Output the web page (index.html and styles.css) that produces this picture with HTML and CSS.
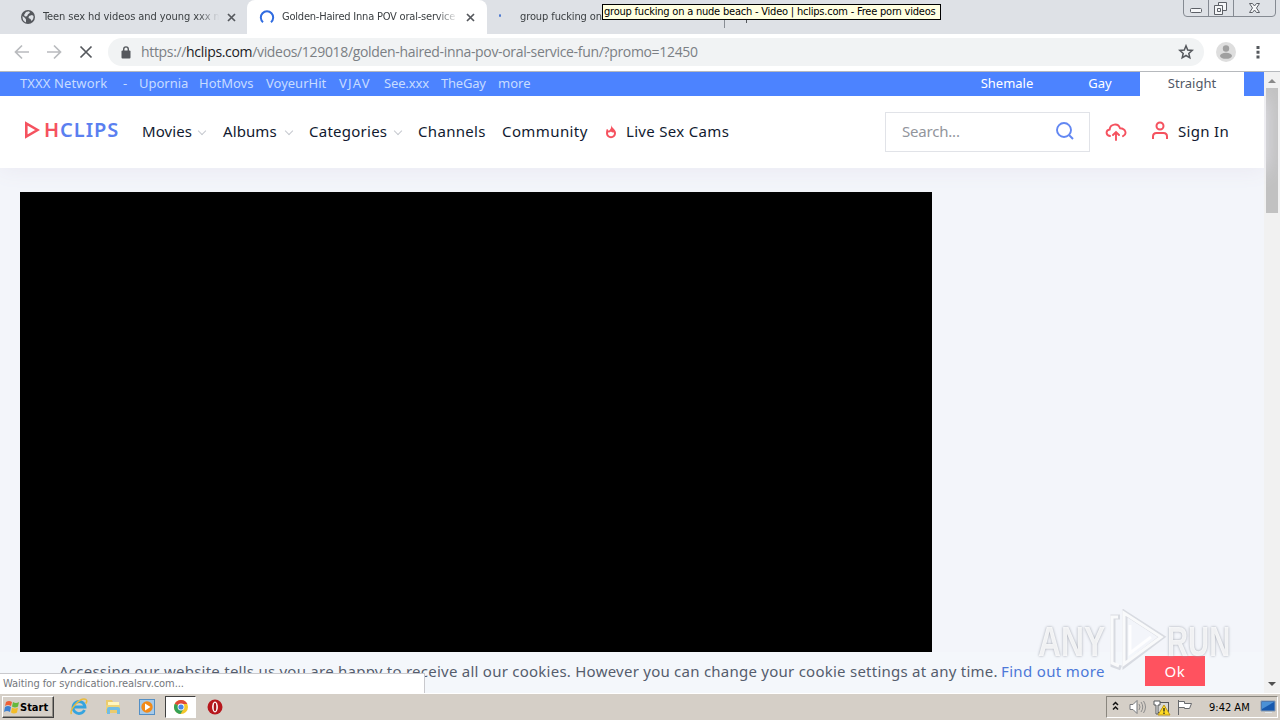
FILE: index.html
```html
<!DOCTYPE html>
<html lang="en">
<head>
<meta charset="utf-8">
<title>Desktop</title>
<link rel="stylesheet" href="styles.css">
</head>
<body>
<div class="desktop">
  <div class="tabs">
    <div class="tab tab-first">
      <svg class="globe" width="14" height="14" viewBox="0 0 14 14"><circle cx="7" cy="7" r="7" fill="#55585d"/><path d="M1.500 6L4 8l1 1.500v3C2.500 11.500 1.300 9.500 1.500 6zM5 2l3-.7 1 1.500-2 1.500-1 2-2 .2L3 5zM8 6l3-1 1.500 1c.2 2-.5 4-2 5L9.500 9 7.500 8z" fill="#dee1e6"/></svg>
      <span class="tab-title t1">Teen sex hd videos and young xxx m</span>
      <svg class="close" width="9" height="9" viewBox="0 0 9 9"><path d="M1 1l7 7M8 1L1 8" stroke="#55585d" stroke-width="1.700"/></svg>
    </div>
    <div class="tab tab-active">
      <svg class="spin" width="16" height="16" viewBox="0 0 16 16"><path d="M4 13.200A6.200 6.200 0 1 1 12 13.200" fill="none" stroke="#2f6be0" stroke-width="2"/></svg>
      <span class="tab-title t2">Golden-Haired Inna POV oral-service</span>
      <svg class="close" width="9" height="9" viewBox="0 0 9 9"><path d="M1 1l7 7M8 1L1 8" stroke="#55585d" stroke-width="1.700"/></svg>
    </div>
    <div class="tab tab-last">
      <i class="dot"></i>
      <span class="tab-title t3">group fucking on a nude beach - Video</span>
      <i class="divider"></i><i class="plus"></i>
    </div>
    <div class="tooltip"><span>group fucking on a nude beach - Video | hclips.com - Free porn videos</span></div>
    <svg class="winbtns" width="94" height="18" viewBox="0 0 94 18"><path d="M.5 0v13q0 3.500 3.500 3.500h85q3.500 0 3.500-3.500V0M25.500 0v16M50.500 0v16" fill="none" stroke="#858a92"/><g fill="#f5f6f8" stroke="#5d6067"><rect x="7.500" y="8.500" width="11" height="4" rx="1"/><path d="M35.500 2.500h8v8h-8z"/><path d="M31.500 5.500h8v9h-8z"/><path d="M34.500 8.500h3v3h-3z"/><path d="M66.500 3.500h3l2 2.500 2-2.500h3L73.500 8l3 4.500h-3L71.500 10l-2 2.500h-3l3-4.500z"/></g></svg>
  </div>

  <div class="toolbar">
    <svg class="navicons" width="108" height="36" viewBox="0 0 108 36"><g fill="none" stroke="#b9bbbe" stroke-width="1.700"><path d="M29 18H16M22 11.500L15.500 18l6.500 6.500M47 18h13M54 11.500l6.500 6.500-6.500 6.500"/><path d="M80.500 12.500l11 11M91.500 12.500l-11 11" stroke="#55585d" stroke-width="1.700"/></g></svg>
    <div class="omnibox">
      <svg class="lock" width="10" height="13" viewBox="0 0 10 13"><rect x=".5" y="4.500" width="9" height="8" rx="1" fill="#55585d"/><path d="M2.700 5V3.200a2.300 2.300 0 0 1 4.600 0V5" fill="none" stroke="#55585d" stroke-width="1.400"/></svg>
      <span class="url">https://<b>hclips.com</b>/videos/129018/golden-haired-inna-pov-oral-service-fun/?promo=12450</span>
      <svg class="star" width="16" height="16" viewBox="0 0 16 16"><path d="M8 1.800l1.700 4.200 4.500.4-3.400 3 1 4.400L8 11.500l-3.800 2.300 1-4.400-3.400-3 4.500-.4z" fill="none" stroke="#55585d" stroke-width="1.500"/></svg>
    </div>
    <svg class="avatar" width="20" height="20" viewBox="0 0 20 20"><circle cx="10" cy="10" r="10" fill="#dedede"/><circle cx="10" cy="6.500" r="3.200" fill="#a0a0a0"/><ellipse cx="10" cy="13.800" rx="6" ry="3" fill="#a0a0a0"/></svg>
    <svg class="dots" width="4" height="14" viewBox="0 0 4 14"><path d="M.5 1h3v3h-3zM.5 5.700h3v3h-3zM.5 10.500h3v3h-3z" fill="#55585d"/></svg>
  </div>

  <div class="view">
    <div class="page">
      <div class="network">
        <span class="n1">TXXX Network</span><span class="n2">-</span><span class="n3">Upornia</span><span class="n4">HotMovs</span><span class="n5">VoyeurHit</span><span class="n6">VJAV</span><span class="n7">See.xxx</span><span class="n8">TheGay</span><span class="n9">more</span>
        <div class="kinds"><span class="k1">Shemale</span><span class="k2">Gay</span><span class="k3">Straight</span></div>
      </div>
      <header class="header">
        <div class="logo"><svg width="16" height="18" viewBox="0 0 16 18"><path d="M2.300 2.500v13L13.500 9z" fill="none" stroke="#f5525f" stroke-width="2.600"/><path d="M6 7v4l3.500-2z" fill="#fff"/></svg><span class="brand"><em>H</em>CLIPS</span></div>
        <nav class="menu">
          <span class="m1">Movies</span><span class="m2">Albums</span><span class="m3">Categories</span><span class="m4">Channels</span><span class="m5">Community</span>
          <svg class="flame" width="12" height="15" viewBox="0 0 12 15"><path d="M6.300 1c.3 3 4.700 4.300 4.700 8.200A5 5 0 0 1 1 9.200C1 7.500 1.300 6.200 1.800 5c1 .4 1.600 1 1.900 2C5.600 5.500 6.500 3.500 6.300 1z" fill="#f5525f"/><path d="M3 8.500c1 .3 2.200-.2 3-1 .7.800 1.900 1.300 3 1 .3 2.400-1.200 3.700-3 3.700S2.800 11 3 8.500z" fill="#fff"/></svg>
          <span class="m6">Live Sex Cams</span>
        </nav>
        <div class="search"><span>Search...</span><svg width="20" height="20" viewBox="0 0 20 20"><circle cx="9" cy="9" r="7" fill="none" stroke="#6287f2" stroke-width="1.900"/><path d="M14 14l4 4" stroke="#6287f2" stroke-width="2"/></svg></div>
        <svg class="upload" width="22" height="20" viewBox="0 0 22 20"><g fill="none" stroke="#f5525f" stroke-width="1.900" stroke-linecap="round"><path d="M5 14C.2 13 .8 8 4.700 7.500 5 2 13 .500 15 6.200c5.800.3 7.300 6 3 8M11 18v-7.500M8 13l3-3 3 3"/></g></svg>
        <svg class="user" width="18" height="20" viewBox="0 0 18 20"><g fill="none" stroke="#f5525f" stroke-width="2"><circle cx="9" cy="5" r="3.500"/><path d="M2 18v-2.500Q2 12 5.500 12h7Q16 12 16 15.500V18"/></g></svg>
        <span class="signin">Sign In</span>
      </header>
      <main class="content"><div class="player"></div></main>
      <div class="cookies">
        <span class="notice">Accessing our website tells us you are happy to receive all our cookies. However you can change your cookie settings at any time.</span>
        <span class="more">Find out more</span>
        <button class="ok">Ok</button>
      </div>
    </div>
    <div class="scrollbar"><i class="up"></i><i class="thumb"></i><i class="down"></i></div>
    <div class="status"><span>Waiting for syndication.realsrv.com...</span></div>
    <div class="watermark"><span>ANY</span>
      <svg width="62" height="64" viewBox="0 0 62 64"><g fill="none" stroke="#c9cdd4" stroke-opacity=".65" stroke-width="5"><path d="M14 8H7v48l8 3M19 4l37 24-37 28z"/></g><g fill="none" stroke="#fff" stroke-opacity=".85" stroke-width="3"><path d="M12 8H6v46l7 3M18 4l37 24-37 27zM24 16v28l21-16"/></g></svg>
      <span>RUN</span></div>
  </div>

  <div class="taskbar">
    <div class="start"><svg width="16" height="16" viewBox="0 0 16 16"><path d="M2 3q3-2 6 0L7 7q-3-2-6 0z" fill="#ee6037"/><path d="M9 3q3 2 6 0l-1 4.500q-3 2-6 0z" fill="#65b83b"/><path d="M1 8q3-2 6 0l-1 5q-3-2-6 0z" fill="#3e81d1"/><path d="M8 8.500q3 2 6 0l-1 5q-3 2-6 0z" fill="#f2bc28"/></svg><span>Start</span></div>
    <svg class="ie" width="18" height="18" viewBox="0 0 18 18"><path d="M14.500 12A6 6 0 1 1 15 9H4" fill="none" stroke="#35a4df" stroke-width="2.800"/><path d="M1.500 16C-1 12 10-1 16 1.500c1.500 1 .5 3-.3 4" fill="none" stroke="#eabb3b" stroke-width="1.500"/></svg>
    <svg class="folder" width="18" height="18" viewBox="0 0 18 18"><path d="M2 2h6l1 2h6v11H2z" fill="#ebcb6c"/><path d="M4 4h11v4H4z" fill="#fff6be"/><path d="M2 7h14v4H2z" fill="#edd479"/><path d="M3 16v-5q0-2 2-2h9q2 0 2 2v5h-3v-4H6v4z" fill="#70bce4"/></svg>
    <svg class="wmp" width="16" height="16" viewBox="0 0 16 16"><rect x=".5" y=".5" width="15" height="15" fill="#a6cae9" stroke="#538fc5"/><circle cx="8" cy="8" r="5.700" fill="#f28a18"/><path d="M6 4.500v7L11.500 8z" fill="#fff"/></svg>
    <div class="task-active"><svg width="14" height="14" viewBox="0 0 14 14"><circle cx="7" cy="7" r="7" fill="#f4c72b"/><path d="M7 7L.8 3.800A7 7 0 0 1 13.300 4H7z" fill="#df4938"/><path d="M7 7L.8 3.800A7 7 0 0 0 6.500 14L9.500 9z" fill="#35a156"/><circle cx="7" cy="7" r="3.400" fill="#fff"/><circle cx="7" cy="7" r="2.600" fill="#4787e8"/></svg></div>
    <svg class="opera" width="16" height="16" viewBox="0 0 16 16"><circle cx="8" cy="8" r="7.500" fill="#b7171d"/><ellipse cx="8" cy="8" rx="2.900" ry="5.400" fill="#fff"/><ellipse cx="8" cy="8" rx="1.300" ry="4.300" fill="#a91319"/></svg>
    <div class="tray">
      <svg width="96" height="20" viewBox="0 0 96 20"><path d="M6 8l2.500-2.500L11 8M6 12.500L8.500 10l2.500 2.500" fill="none" stroke="#111" stroke-width="1.500"/><path d="M23 7.500h3l4-4v13l-4-4h-3z" fill="#fff" stroke="#77797c"/><path d="M32 7q2 3 0 6M34 5q3.500 5 0 10M36.500 4q4 6 0 12" fill="none" stroke="#8d8d8d"/><rect x="49.500" y="5.500" width="12" height="10" fill="#d8d8d4" stroke="#55585b"/><path d="M47 4h6v4h-2v9h-2V8h-2z" fill="#fff" stroke="#55585b"/><path d="M57 8l6 10H51z" fill="#ffdb21" stroke="#bd971a"/><path d="M57 11v3.500M57 15.500v1.500" stroke="#222" stroke-width="1.300"/><path d="M71.500 3v15M71.500 4.500h6v2h7l-2 5h-5v-1h-6" fill="#fff" stroke="#686a6d"/></svg>
      <span class="clock">9:42 AM</span>
      <svg class="monitor" width="16" height="14" viewBox="0 0 16 14"><path d="M1 1h14v10H1z" fill="#1759ae" stroke="#879bb2"/><path d="M2 2h12L2 9z" fill="#4b91d6"/><path d="M5 12h7v1H5z" fill="#dfe6eb"/></svg>
    </div>
  </div>
</div>
</body>
</html>
```
FILE: styles.css
```css
* { box-sizing: border-box; }
body { margin: 0; overflow: hidden; font-family: "DejaVu Sans Condensed", "DejaVu Sans", sans-serif; }
.desktop { width: 1280px; height: 720px; display: flex; flex-direction: column; overflow: hidden; }
span { white-space: nowrap; flex: none; }
svg { flex: none; display: block; }

.tabs { height: 34px; flex: none; background: #dee1e6; display: flex; position: relative; font-size: 11px; color: #3c4043; }
.tab { display: flex; align-items: center; height: 34px; }
.tab-first { width: 247px; padding-left: 21px; }
.tab-title { width: 176px; overflow: hidden; line-height: 16px; -webkit-mask-image: linear-gradient(90deg, #000 88%, transparent); }
.t1 { margin: 0 8px; letter-spacing: -.08px; }
.tab-active { width: 240px; padding-left: 12px; background: #fff; border-radius: 8px 8px 0 0; }
.t2 { margin: 0 8px 0 7px; letter-spacing: -.21px; }
.tab-last { width: 260px; padding-left: 12px; }
.dot { width: 3px; height: 3px; border-radius: 50%; background: #4774cf; margin-top: -3px; }
.t3 { width: 200px; margin-left: 19px; letter-spacing: -.1px; }
.divider { width: 1px; height: 19px; background: #888d94; margin: 3px 0 0 4px; }
.plus { width: 2px; height: 12px; background: #55585d; margin: 0 0 0 21px; }
.tooltip { position: absolute; left: 602px; top: 4px; width: 339px; height: 16px; background: #ffffe1; border: 1px solid #000; color: #000; line-height: 14px; padding-left: 1px; overflow: hidden; letter-spacing: -.21px; }
.winbtns { position: absolute; right: 3px; top: 0; }

.toolbar { height: 38px; flex: none; background: #fff; border-bottom: 1px solid #b6b9bd; display: flex; align-items: center; padding-bottom: 1px; }
.omnibox { width: 1096px; height: 28px; border-radius: 14px; background: #f1f3f4; display: flex; align-items: center; padding-left: 13px; }
.lock { margin-right: 10px; }
.url { width: 1037px; font: 14px/20px "Open Sans", sans-serif; letter-spacing: -.33px; color: #7b7f84; }
.url b { color: #202124; font-weight: 400; }
.avatar { margin-left: 12px; }
.dots { margin-left: 20px; }

.view { height: 621px; flex: none; display: flex; position: relative; }
.page { width: 1264px; display: flex; flex-direction: column; background: #f3f5fa; font-family: "Noto Sans", sans-serif; }
.network { height: 24px; flex: none; background: #4c83ff; display: flex; align-items: center; padding-left: 20px; font-size: 13px; color: #c7dcff; line-height: 22px; position: relative; z-index: 1; }
.network > span { height: 24px; }
.n1 { width: 103px; letter-spacing: .12px; } .n2 { width: 16px; } .n3 { width: 60px; } .n4 { width: 67px; } .n5 { width: 73px; } .n6 { width: 45px; letter-spacing: 1.2px; } .n7 { width: 57px; } .n8 { width: 57px; } .n9 { width: 34px; }
.n7 { letter-spacing: -.15px; } .n8 { letter-spacing: -.2px; }
.kinds { margin-left: 425px; display: flex; height: 24px; color: #fff; }
.kinds span { text-align: center; line-height: 23px; }
.k1 { width: 80px; margin-left: 10px; } .k2 { width: 80px; margin-left: 13px; }
.k3 { width: 104px; background: #fff; color: #515866; }
.header { height: 72px; flex: none; background: #fff; display: flex; align-items: center; box-shadow: 0 2px 20px #eae9f2; color: #111a30; font-size: 15px; position: relative; }
.logo { display: flex; align-items: center; margin: -4px 0 0 24px; width: 118px; }
.brand { margin-left: 4px; color: #5a7ff0; font: 600 20px/24px "Noto Sans", sans-serif; letter-spacing: .95px; }
.brand em { color: #f5525f; font-style: normal; }
.menu { display: flex; align-items: center; width: 743px; margin-top: -2px; }
.menu span { line-height: 20px; display: flex; align-items: center; letter-spacing: .1px; }
.m1 { width: 81px; } .m2 { width: 86px; } .m3 { width: 109px; } .m4 { width: 84px; } .m5 { width: 103px; }
.menu .m4, .menu .m6 { letter-spacing: .32px; } .menu .m5 { letter-spacing: .4px; }
.menu .m3 { letter-spacing: .25px; }
.m1::after, .m2::after, .m3::after { content: ""; width: 5px; height: 5px; border: solid #c6c9cf; border-width: 0 1.5px 1.5px 0; transform: rotate(45deg); margin-left: auto; }
.m1::after { margin-right: 18px; } .m2::after { margin-right: 17px; } .m3::after { margin-right: 17px; }
.flame { margin-right: 9px; }
.search { width: 205px; height: 40px; border: 1px solid #e1e3e8; display: flex; align-items: center; padding: 0 0 2px 16px; color: #92959c; }
.search span { width: 153px; letter-spacing: -.2px; }
.upload { margin-left: 15px; }
.user { margin: -3px 9px 0 24px; }
.signin { margin-top: -2px; letter-spacing: .3px; }
.content { flex: 1; padding: 24px 20px 0; display: flex; }
.player { width: 912px; height: 460px; background: #000; }
.cookies { height: 41px; flex: none; background: #f4f7fb; display: flex; align-items: center; padding: 0 0 3px 59px; font-size: 15px; color: #555d6d; line-height: 20px; }
.notice { width: 942px; letter-spacing: .245px; }
.more { width: 144px; color: #4c78d8; letter-spacing: .35px; }
.ok { width: 60px; height: 30px; border: 0; padding: 0; background: #ff525f; color: #fff; font: 15px "Noto Sans", sans-serif; letter-spacing: .7px; }
.scrollbar { width: 16px; background: #f1f1f1; display: flex; flex-direction: column; align-items: center; padding: 7px 0; }
.up { border: 4px solid transparent; border-top: 0; border-bottom: 4px solid #888; }
.thumb { width: 12px; height: 125px; margin-top: 5px; background: #c1c1c1; }
.down { margin-top: auto; border: 4px solid transparent; border-bottom: 0; border-top: 4px solid #505050; }
.status { position: absolute; left: 0; top: 601px; width: 425px; height: 20px; background: #fff; border: solid #c9c9cd; border-width: 1px 1px 0 0; color: #74777c; font-size: 11px; line-height: 19px; padding-left: 3px; letter-spacing: -.07px; }
.watermark { position: absolute; left: 1038px; top: 537px; display: flex; align-items: center; font: 700 43px/60px "Liberation Sans Narrow", "Liberation Sans", sans-serif; color: rgba(255,255,255,.85); text-shadow: 0 0 3px #9a9faa; }
.watermark span { width: 66px; height: 60px; transform-origin: left; transform: scaleX(.74); }
.watermark span:last-child { transform: scaleX(.68); }
.watermark svg { margin: 0 -1px 0 2px; }

.taskbar { height: 27px; flex: none; background: #d5cfc7; border-top: 1px solid #fff; display: flex; align-items: center; }
.start { margin-left: 2px; width: 52px; height: 22px; border: 1px solid; border-color: #fff #404040 #404040 #fff; box-shadow: inset -1px -1px #918d86; display: flex; align-items: center; padding-left: 1px; font-size: 11px; font-weight: 700; color: #000; }
.ie { margin-left: 16px; } .folder { margin-left: 16px; } .wmp { margin-left: 17px; }
.task-active { width: 31px; height: 22px; margin-left: 10px; background: #fff; border: 1px solid; border-color: #404040 #fff #fff #404040; display: grid; place-items: center; }
.opera { margin-left: 11px; }
.tray { margin-left: auto; width: 172px; height: 22px; margin-right: 2px; border: 1px solid; border-color: #8a867e #fff #fff #8a867e; display: flex; align-items: center; font-size: 11px; color: #000; }
.clock { width: 51px; margin-left: 6px; }
```
